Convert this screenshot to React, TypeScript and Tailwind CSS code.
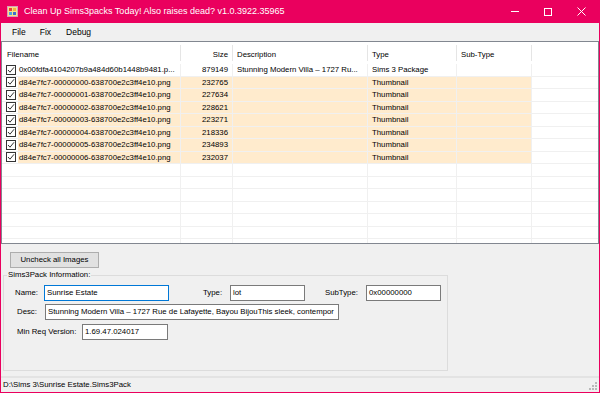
import React from "react";

const COLS = "grid-cols-[179px_52px_135px_89px_75px_1fr]";

const files = [
  { name: "0x00fdfa4104207b9a484d60b1448b9481.p...", size: "879149", desc: "Stunning Modern Villa – 1727 Ru...", type: "Sims 3 Package", thumb: false },
  { name: "d84e7fc7-00000000-638700e2c3ff4e10.png", size: "232765", desc: "", type: "Thumbnail", thumb: true },
  { name: "d84e7fc7-00000001-638700e2c3ff4e10.png", size: "227634", desc: "", type: "Thumbnail", thumb: true },
  { name: "d84e7fc7-00000002-638700e2c3ff4e10.png", size: "228621", desc: "", type: "Thumbnail", thumb: true },
  { name: "d84e7fc7-00000003-638700e2c3ff4e10.png", size: "223271", desc: "", type: "Thumbnail", thumb: true },
  { name: "d84e7fc7-00000004-638700e2c3ff4e10.png", size: "218336", desc: "", type: "Thumbnail", thumb: true },
  { name: "d84e7fc7-00000005-638700e2c3ff4e10.png", size: "234893", desc: "", type: "Thumbnail", thumb: true },
  { name: "d84e7fc7-00000006-638700e2c3ff4e10.png", size: "232037", desc: "", type: "Thumbnail", thumb: true },
];

function Checkbox() {
  return (
    <div className="w-[10px] h-[10px] border border-[#333] bg-white flex items-center justify-center shrink-0">
      <svg width="8" height="8" viewBox="0 0 8 8">
        <path d="M1 4 L3 6.2 L7 1.3" fill="none" stroke="#333" strokeWidth="1" />
      </svg>
    </div>
  );
}

function AppIcon() {
  return (
    <svg width="11" height="11" viewBox="0 0 11 11">
      <rect x="0.5" y="0.5" width="10" height="10" fill="#f6e08a" stroke="#d8a0b8" />
      <rect x="2" y="2" width="3" height="3" fill="#e8403a" />
      <rect x="6" y="2" width="3" height="3" fill="#f3b33d" />
      <rect x="2" y="6" width="3" height="3" fill="#4ca4e0" />
      <rect x="6" y="6" width="3" height="3" fill="#3b6fd0" />
    </svg>
  );
}

function Input({ value, w, focused }: { value: string; w: string; focused?: boolean }) {
  return (
    <div
      className={`${w} h-[16px] bg-white border ${focused ? "border-[#0078d7]" : "border-[#7a7a7a]"} px-[2px] flex items-center overflow-hidden whitespace-nowrap`}
    >
      {value}
    </div>
  );
}

export default function App() {
  return (
    <div className="w-[600px] h-[393px] flex flex-col bg-[#f0f0f0] border-x border-b border-[#ea005e] font-['Liberation_Sans',Arial,sans-serif] text-[7.8px] text-black overflow-hidden">
      {/* title bar */}
      <div className="h-[23px] shrink-0 bg-[#ea005e] flex items-center text-white">
        <div className="ml-[6px] w-[11px] flex">
          <AppIcon />
        </div>
        <div className="ml-[6px] text-[9px] flex-1">Clean Up Sims3packs Today! Also raises dead? v1.0.3922.35965</div>
        <div className="flex items-center h-full">
          <div className="w-[33px] flex justify-center">
            <div className="w-[8px] h-px bg-white" />
          </div>
          <div className="w-[33px] flex justify-center">
            <div className="w-[8px] h-[8px] border border-white" />
          </div>
          <div className="w-[34px] flex justify-center mr-[1px]">
            <svg width="9" height="9" viewBox="0 0 9 9">
              <path d="M0.5 0.5 L8.5 8.5 M8.5 0.5 L0.5 8.5" stroke="white" strokeWidth="1" />
            </svg>
          </div>
        </div>
      </div>

      {/* menu */}
      <div className="h-[18px] shrink-0 flex items-center text-[8.5px]">
        <span className="ml-[11px]">File</span>
        <span className="ml-[14px]">Fix</span>
        <span className="ml-[15px]">Debug</span>
      </div>

      {/* list view */}
      <div className="h-[203px] shrink-0 bg-white border border-[#828790] overflow-hidden flex flex-col">
        <div className={`grid ${COLS} h-[22px] shrink-0`}>
          <div className="border-r border-[#e5e5e5] my-[3px] flex items-end pl-[5px]">Filename</div>
          <div className="border-r border-[#e5e5e5] my-[3px] flex items-end justify-end pr-[4px]">Size</div>
          <div className="border-r border-[#e5e5e5] my-[3px] flex items-end pl-[4px]">Description</div>
          <div className="border-r border-[#e5e5e5] my-[3px] flex items-end pl-[4px]">Type</div>
          <div className="border-r border-[#e5e5e5] my-[3px] flex items-end pl-[4px]">Sub-Type</div>
          <div />
        </div>
        {files.map((f, i) => {
          const bg = f.thumb ? "bg-[#ffebcd]" : "bg-white";
          return (
            <div key={i} className={`grid ${COLS} h-[12.5px] shrink-0 border-b border-[#f0f0f0]`}>
              <div className="flex items-center border-r border-[#f0f0f0] whitespace-nowrap overflow-hidden">
                <div className="pl-[4px] pr-[2px] h-full flex items-center bg-white">
                  <Checkbox />
                </div>
                <div className={`${bg} h-full flex-1 flex items-center pl-[1px]`}>{f.name}</div>
              </div>
              <div className={`${bg} flex items-center justify-end pr-[4px] border-r border-[#f0f0f0]`}>{f.size}</div>
              <div className={`${bg} flex items-center pl-[4px] border-r border-[#f0f0f0] whitespace-nowrap overflow-hidden`}>{f.desc}</div>
              <div className={`${bg} flex items-center pl-[4px] border-r border-[#f0f0f0]`}>{f.type}</div>
              <div className={`${bg} border-r border-[#f0f0f0]`} />
              <div />
            </div>
          );
        })}
        {Array.from({ length: 7 }).map((_, i) => (
          <div key={`e${i}`} className={`grid ${COLS} h-[12.5px] shrink-0 border-b border-[#f0f0f0]`}>
            <div className="border-r border-[#f0f0f0]" />
            <div className="border-r border-[#f0f0f0]" />
            <div className="border-r border-[#f0f0f0]" />
            <div className="border-r border-[#f0f0f0]" />
            <div className="border-r border-[#f0f0f0]" />
            <div />
          </div>
        ))}
      </div>

      {/* lower area */}
      <div className="flex-1 flex flex-col">
        <button className="mt-[8px] ml-[9px] w-[89px] h-[16px] bg-[#e1e1e1] border border-[#adadad] flex items-center justify-center">
          Uncheck all Images
        </button>
        <fieldset className="mt-[2px] ml-[2px] w-[445px] h-[101px] border border-[#dcdcdc] p-0">
          <legend className="ml-[3px] px-[1px] leading-[10px]">Sims3Pack Information:</legend>
          <div className="mt-[5px] flex items-center">
            <span className="ml-[11px] w-[29px]">Name:</span>
            <Input value="Sunrise Estate" w="w-[125px]" focused />
            <span className="ml-[34px] w-[27px]">Type:</span>
            <Input value="lot" w="w-[75px]" />
            <span className="ml-[20px] w-[41px]">SubType:</span>
            <Input value="0x00000000" w="w-[75px]" />
          </div>
          <div className="mt-[3px] flex items-center">
            <span className="ml-[13px] w-[28px]">Desc:</span>
            <Input value="Stunning Modern Villa – 1727 Rue de Lafayette, Bayou BijouThis sleek, contempor" w="w-[294px]" />
          </div>
          <div className="mt-[4px] flex items-center">
            <span className="ml-[13px] w-[65px]">Min Req Version:</span>
            <Input value="1.69.47.024017" w="w-[86px]" />
          </div>
        </fieldset>
      </div>

      {/* status bar */}
      <div className="h-[16px] shrink-0 border-t-2 border-[#e3e3e3] flex items-center justify-between">
        <span className="ml-[2px]">D:\Sims 3\Sunrise Estate.Sims3Pack</span>
        <svg width="9" height="9" viewBox="0 0 9 9" className="mr-[1px] mt-[3px]">
          <rect x="6" y="0" width="2" height="2" fill="#b8b8b8" />
          <rect x="3" y="3" width="2" height="2" fill="#b8b8b8" />
          <rect x="6" y="3" width="2" height="2" fill="#b8b8b8" />
          <rect x="0" y="6" width="2" height="2" fill="#b8b8b8" />
          <rect x="3" y="6" width="2" height="2" fill="#b8b8b8" />
          <rect x="6" y="6" width="2" height="2" fill="#b8b8b8" />
        </svg>
      </div>
    </div>
  );
}
